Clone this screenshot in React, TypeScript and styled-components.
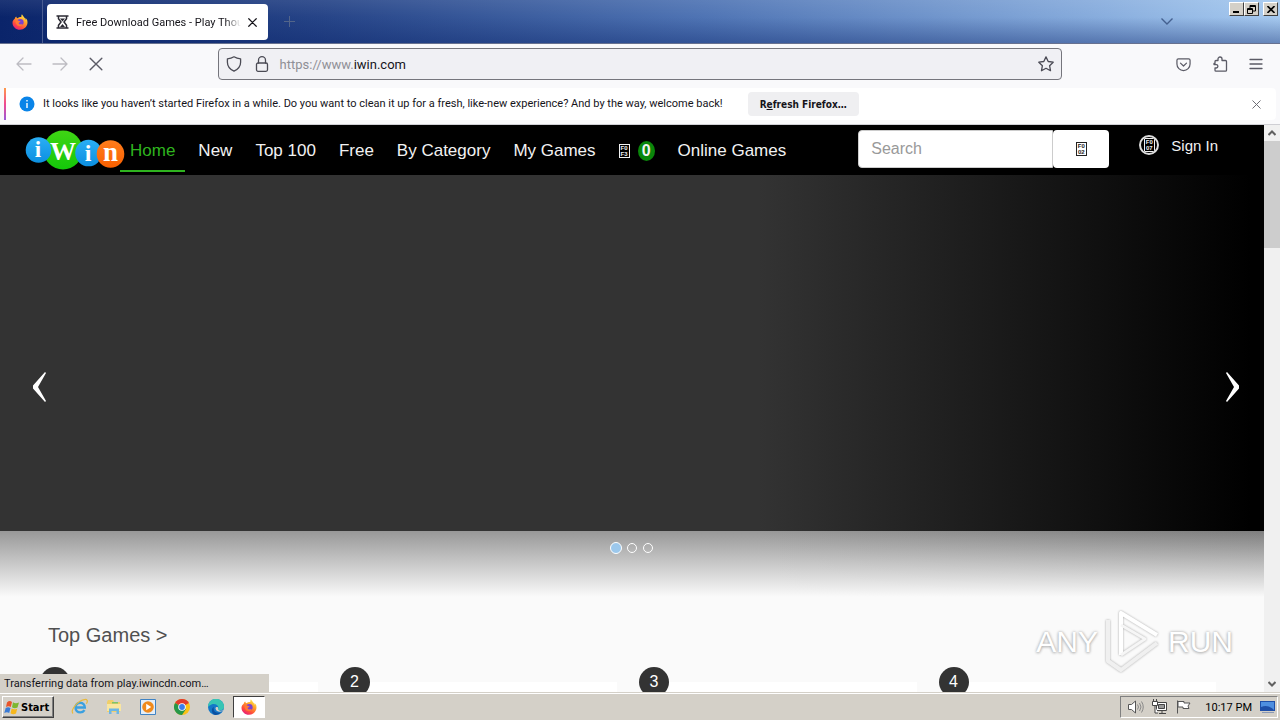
import React from "react";
import styled, { createGlobalStyle, css } from "styled-components";

const uiFont = `Roboto, "Noto Sans", sans-serif`;
const boldFont = `"DejaVu Sans Condensed", "DejaVu Sans", sans-serif`;
const siteFont = `"Liberation Sans", Arial, sans-serif`;

const GlobalStyle = createGlobalStyle`
  *, *::before, *::after { box-sizing: border-box; }
  body { margin: 0; font-family: ${uiFont}; font-size: 11px; color: #15141a; }
  button, input { font: inherit; color: inherit; margin: 0; }
  button { padding: 0; border: 0; background: none; }
  a { color: inherit; text-decoration: none; }
  h2 { margin: 0; }
  svg { display: block; flex: none; }
`;

const Screen = styled.div`
  display: flex;
  flex-direction: column;
  height: 100vh;
  overflow: hidden;
`;

/* ---------- title bar ---------- */

const TitleBar = styled.header`
  display: flex;
  flex: none;
  height: 44px;
  background:
    linear-gradient(to bottom, rgba(255, 255, 255, 0.08), rgba(10, 36, 106, 0) 40%, rgba(10, 36, 106, 0.4)),
    linear-gradient(to right, #0a246a, #264487 25%, #4f74b4 55%, #86abdc 85%, #a6caf0);
  border-bottom: 1px solid #67718f;
`;

const PinnedView = styled.button`
  display: grid;
  place-items: center;
  width: 43px;
  padding-right: 3px;
  border-right: 1px solid #4a5d92;
`;

const Tab = styled.div`
  display: flex;
  align-items: center;
  gap: 7px;
  width: 221px;
  height: 36px;
  margin: 4px 0 0 4px;
  padding: 0 11px 0 9px;
  background: #fff;
  border-radius: 4px;
`;

const TabTitle = styled.span`
  flex: 1;
  overflow: hidden;
  white-space: nowrap;
  color: #15141a;
  mask-image: linear-gradient(to left, transparent, #000 16px);
`;

const NewTabButton = styled.button`
  display: grid;
  place-items: center;
  width: 42px;
`;

const TabsMenuButton = styled.button`
  display: grid;
  place-items: center;
  width: 36px;
  margin-left: auto;
`;

const WindowButtons = styled.div`
  display: flex;
  margin: 2px 2px 0 44px;
`;

const WindowButton = styled.button<{ $apart?: boolean }>`
  display: grid;
  place-items: center;
  width: 15px;
  height: 14px;
  margin-left: ${(p) => (p.$apart ? 4 : 0)}px;
  background: #d4d0c8;
  border: 1px solid;
  border-color: #fff #404040 #404040 #fff;
`;

/* ---------- toolbar ---------- */

const Toolbar = styled.div`
  display: flex;
  flex: none;
  align-items: center;
  height: 44px;
  padding: 0 6px 4px;
  background: #f9f9fb;
`;

const ToolButton = styled.button<{ $faded?: boolean }>`
  display: grid;
  place-items: center;
  width: 36px;
  height: 32px;
  color: ${(p) => (p.$faded ? "#bdbcc2" : "#5b5b66")};
`;

const Spacer = styled.div`
  flex: 1;
`;

const UrlBar = styled.label`
  display: flex;
  flex: 8;
  align-items: center;
  height: 32px;
  padding: 0 7px;
  gap: 12px;
  background: #f0f0f4;
  border: 1px solid #75757c;
  border-radius: 4px;
  color: #4b4b55;
`;

const UrlText = styled.span`
  flex: 1;
  margin-left: -2px;
  font-size: 13px;
  color: #8f8f96;
  b { font-weight: 400; color: #15141a; }
`;

/* ---------- notification ---------- */

const Notice = styled.div`
  flex: none;
  height: 37px;
  padding: 0 4px 4px;
  background: #f9f9fb;
  border-bottom: 1px solid #cfcfd4;
`;

const NoticeCard = styled.div`
  display: flex;
  align-items: center;
  height: 32px;
  padding: 0 15px;
  background: linear-gradient(#ff9a4a, #f04a90 50%, #9a5ad8) left / 2px 100% no-repeat, #fff;
  border-radius: 0 4px 4px 0;
`;

const NoticeText = styled.span`
  margin-left: 8px;
  padding-bottom: 1px;
  white-space: nowrap;
`;

const RefreshButton = styled.button`
  height: 24px;
  margin-left: 25px;
  padding: 0 12px;
  background: #efeff1;
  border-radius: 4px;
  font: 700 10px ${boldFont};
  white-space: nowrap;
`;

const CloseNotice = styled.button`
  margin-left: auto;
  color: #6b6b72;
`;

/* ---------- page ---------- */

const Viewport = styled.div`
  position: relative;
  display: flex;
  flex: 1;
  min-height: 0;
`;

const Page = styled.main`
  flex: 1;
  min-width: 0;
  overflow: hidden;
  background: #fafafa;
  font-family: ${siteFont};
  font-size: 16px;
`;

const SiteNav = styled.nav`
  display: flex;
  height: 50px;
  padding-left: 25px;
  background: #000;
  color: #f2f2f2;
`;

const LogoLink = styled.a`
  padding-top: 5px;
  margin-right: -5px;
`;

const NavLinks = styled.div`
  display: flex;
  gap: 3px;
  height: 47px;
`;

const NavLink = styled.a<{ $active?: boolean }>`
  display: flex;
  align-items: center;
  gap: 8px;
  padding: 6px 10px 0;
  border-bottom: 2px solid transparent;
  font-size: 17px;
  white-space: nowrap;
  ${(p) =>
    p.$active &&
    css`
      color: #2fb41f;
      border-color: #2fb41f;
    `}
`;

const Badge = styled.span`
  display: grid;
  place-items: center;
  width: 17px;
  height: 20px;
  border-radius: 50%;
  background: #0a860a;
  font-size: 16px;
  font-weight: 700;
`;

const GlyphBox = styled.span`
  display: block;
  width: 11px;
  height: 14px;
  border: 1px solid currentColor;
  font: 700 6px/6px "Liberation Sans", sans-serif;
  text-align: center;
`;

const SearchForm = styled.form`
  display: flex;
  width: 251px;
  height: 38px;
  margin: 5px 30px 0 auto;
`;

const SearchInput = styled.input`
  flex: 1;
  min-width: 0;
  padding: 0 12px;
  border: 1px solid #ccc;
  border-radius: 4px 0 0 4px;
  background: #fff;
  color: #333;
  &::placeholder { color: #999; opacity: 1; }
`;

const SearchButton = styled.button`
  display: grid;
  place-items: center;
  width: 56px;
  background: #fff;
  border-radius: 4px;
  color: #222;
`;

const SignIn = styled.a`
  display: flex;
  align-items: center;
  gap: 12px;
  height: 40px;
  margin-right: 46px;
  font-size: 15px;
  white-space: nowrap;
`;

const Avatar = styled.span`
  display: grid;
  place-items: center;
  width: 20px;
  height: 20px;
  border: 2px solid #ddd;
  border-radius: 50%;
  overflow: hidden;
`;

const Hero = styled.section`
  display: flex;
  align-items: center;
  justify-content: space-between;
  aspect-ratio: 32 / 9;
  padding: 69px 24px 0 32px;
  background: linear-gradient(to right, #333 60%, #000 99%);
`;

const Dots = styled.div`
  display: flex;
  align-items: center;
  justify-content: center;
  gap: 6px;
  height: 66px;
  padding: 0 2px 32px 0;
  background: linear-gradient(rgba(250, 250, 250, 0), #fafafa), linear-gradient(to right, #989898 60%, #7e7e7e);
`;

const Dot = styled.button<{ $on?: boolean }>`
  width: ${(p) => (p.$on ? 12 : 10)}px;
  height: ${(p) => (p.$on ? 12 : 10)}px;
  border: 1px solid #fff;
  border-radius: 50%;
  background: ${(p) => (p.$on ? "#9cc8ec" : "transparent")};
  margin-right: ${(p) => (p.$on ? -1 : 0)}px;
`;

const SectionTitle = styled.h2`
  padding: 24px 48px 0;
  font-size: 20px;
  line-height: 28px;
  font-weight: 400;
  color: #505050;
`;

const GameGrid = styled.div`
  display: grid;
  grid-template-columns: repeat(4, 1fr);
  gap: 30px;
  padding: 33px 48px 0;
`;

const GameCard = styled.article`
  height: 200px;
  background: #fff;
`;

const Rank = styled.span`
  display: grid;
  place-items: center;
  width: 30px;
  height: 30px;
  margin: -15px 0 0 -8px;
  padding-top: 1px;
  border-radius: 50%;
  background: #333;
  color: #fff;
`;

const ScrollBar = styled.div`
  display: flex;
  flex-direction: column;
  width: 16px;
  background: #f0f0f0;
  color: #606060;
`;

const ScrollArrow = styled.button`
  display: grid;
  place-items: center;
  height: 16px;
`;

const ScrollTrack = styled.div`
  flex: 1;
`;

const ScrollThumb = styled.div`
  height: 20%;
  background: #cdcdcd;
`;

const StatusPanel = styled.div`
  position: absolute;
  left: 0;
  bottom: 0;
  width: 269px;
  height: 18px;
  padding-left: 4px;
  background: #d4d0c8;
  line-height: 20px;
  white-space: nowrap;
`;

const Watermark = styled.div`
  position: absolute;
  right: 47px;
  bottom: 18px;
  display: flex;
  align-items: center;
  gap: 7px;
  font: 400 30px/64px "Liberation Sans Narrow", "Liberation Sans", sans-serif;
  color: #fff;
  text-shadow: 0 0 3px #aaa, 0 1px 3px #bbb;
`;

const WatermarkArrow = styled.svg`
  filter: drop-shadow(0 0 1px #a8a8a8);
`;

/* ---------- taskbar ---------- */

const TaskBar = styled.footer`
  display: flex;
  flex: none;
  align-items: center;
  height: 28px;
  padding: 1px 2px 0;
  background: #d4d0c8;
  border-top: 1px solid #d4d0c8;
  box-shadow: inset 0 1px #fff;
`;

const StartButton = styled.button`
  display: flex;
  align-items: center;
  gap: 1px;
  width: 52px;
  height: 22px;
  padding-left: 1px;
  border: 1px solid;
  border-color: #fff #404040 #404040 #fff;
  box-shadow: inset -1px -1px #808080;
  font: 700 11px ${boldFont};
  color: #000;
`;

const QuickLaunch = styled.div`
  display: flex;
  margin-left: 9px;
`;

const TaskButton = styled.button<{ $active?: boolean }>`
  display: grid;
  place-items: center;
  width: 34px;
  height: 22px;
  ${(p) =>
    p.$active &&
    css`
      width: 32px;
      background: #fff;
      border: 1px solid;
      border-color: #404040 #fff #fff #404040;
    `}
`;

const Tray = styled.div`
  display: flex;
  align-items: center;
  height: 22px;
  margin-left: auto;
  padding: 0 1px 0 6px;
  gap: 7px;
  border: 1px solid;
  border-color: #808080 #fff #fff #808080;
  color: #000;
`;

const Clock = styled.time`
  margin: 0 1px 0 6px;
  white-space: nowrap;
`;

/* ---------- drawings ---------- */

const Cross = ({ size, width = 1.2 }: { size: number; width?: number }) => (
  <svg width={size} height={size} viewBox="0 0 12 12" fill="none" stroke="currentColor" strokeWidth={width} strokeLinecap="round">
    <path d="M1 1l10 10M11 1L1 11" />
  </svg>
);

const Stroke = ({ size = 16, width = 1.3, children }: { size?: number; width?: number; children: React.ReactNode }) => (
  <svg width={size} height={size} viewBox="0 0 16 16" fill="none" stroke="currentColor" strokeWidth={width} strokeLinecap="round" strokeLinejoin="round">
    {children}
  </svg>
);

const FirefoxLogo = ({ id, size = 16 }: { id: string; size?: number }) => (
  <svg width={size} height={size} viewBox="0 0 16 16">
    <defs>
      <linearGradient id={id} x1="0.8" y1="0" x2="0.2" y2="1">
        <stop offset="0" stopColor="#fff44f" />
        <stop offset="0.35" stopColor="#ffa62b" />
        <stop offset="0.7" stopColor="#ff4f3a" />
        <stop offset="1" stopColor="#e31587" />
      </linearGradient>
    </defs>
    <path fill={`url(#${id})`} d="M15.200 6.200c-.4-1-1.200-2-1.800-2.300.4.9.6 1.700.6 2.200C13 3.700 11.200 2.700 9.900.300 9.500 1.100 9.200 2 9.300 3 7.700 3 6.400 3.600 5.400 4.200c-.7-.3-1.100-.9-1.200-1.700C3.300 3.100 2.800 3.900 2.700 4.800 1.600 5.600.4 7 .5 9c.2 3.900 3.400 6.800 7.400 6.800s7.400-3.100 7.600-7c0-.9-.1-1.800-.3-2.600z" />
    <circle cx="8.300" cy="8.300" r="3.300" fill="#7a42d0" />
    <path fill="#ff7a35" d="M3.600 6.200c1.400-.5 2.500-.2 3.300.7.900.1 1.500.2 1.600.5-.2.700-1.300.9-1.700 1.300-.3 1.200.8 2 2 1.600 1-.3 1.600-.2 1.900.2-.8 1.300-2.100 1.900-3.600 1.600-2.500-.5-3.900-3.200-3.500-5.900z" />
  </svg>
);

const IWinLogo = () => (
  <svg width="100" height="41" viewBox="0 0 100 41" role="img" aria-label="iWin">
    <defs>
      <linearGradient id="iw-blue" x1="0" y1="0" x2="0" y2="1">
        <stop offset="0" stopColor="#2aaef5" />
        <stop offset="1" stopColor="#0c8fe0" />
      </linearGradient>
      <linearGradient id="iw-green" x1="0" y1="0" x2="0" y2="1">
        <stop offset="0" stopColor="#3fd414" />
        <stop offset="1" stopColor="#14c80a" />
      </linearGradient>
      <linearGradient id="iw-orange" x1="0" y1="0" x2="0" y2="1">
        <stop offset="0" stopColor="#ff7d1c" />
        <stop offset="1" stopColor="#f96000" />
      </linearGradient>
    </defs>
    <circle cx="38" cy="20" r="19.500" fill="url(#iw-green)" />
    <circle cx="13.500" cy="20" r="12.800" fill="url(#iw-blue)" />
    <circle cx="63.500" cy="23" r="13.300" fill="url(#iw-blue)" />
    <circle cx="85.500" cy="24" r="13.800" fill="url(#iw-orange)" />
    <g fill="#fff" fontFamily='"Liberation Serif", serif' fontWeight="700" textAnchor="middle">
      <text x="13" y="27" fontSize="23">i</text>
      <text x="38" y="30" fontSize="26">W</text>
      <text x="63" y="31" fontSize="24">i</text>
      <text x="85.500" y="31" fontSize="27">n</text>
    </g>
  </svg>
);

const Hex = ({ top, bottom }: { top: string; bottom: string }) => (
  <GlyphBox aria-hidden="true">
    {top}
    <br />
    {bottom}
  </GlyphBox>
);

const links = ["New", "Top 100", "Free", "By Category", "My Games"];

export default function App() {
  return (
    <Screen>
      <GlobalStyle />

      <TitleBar>
        <PinnedView aria-label="Firefox View">
          <FirefoxLogo id="fx-view" />
        </PinnedView>
        <Tab>
          <svg width="13" height="14" viewBox="0 0 13 14" fill="none" stroke="#2b2a33" strokeWidth="1.500">
            <path d="M.500 1h12M.500 13h12M2.500 1v2.800L5 7l-2.500 3.200V13M10.500 1v2.800L8 7l2.500 3.200V13" />
            <path d="M4 3.500h5L6.500 6.500zM4 12l2.500-3L9 12z" fill="#2b2a33" stroke="none" />
          </svg>
          <TabTitle>Free Download Games - Play Thousands</TabTitle>
          <button aria-label="Close tab"><Cross size={9} width={1.600} /></button>
        </Tab>
        <NewTabButton aria-label="New tab">
          <svg width="11" height="11" viewBox="0 0 11 11" stroke="#53658a" strokeWidth="1"><path d="M5.500 0v11M0 5.500h11" /></svg>
        </NewTabButton>
        <TabsMenuButton aria-label="List all tabs">
          <svg width="12" height="7" viewBox="0 0 12 7" fill="none" stroke="#44608f" strokeWidth="1.400"><path d="M.5.500L6 6l5.500-5.500" /></svg>
        </TabsMenuButton>
        <WindowButtons>
          <WindowButton aria-label="Minimize">
            <svg width="9" height="8" viewBox="0 0 9 8"><path d="M1 6h6v2H1z" /></svg>
          </WindowButton>
          <WindowButton aria-label="Restore">
            <svg width="9" height="9" viewBox="0 0 9 9" fill="none" stroke="#000"><path d="M3 3V.500h5.500V6H6M3 1.500h5M.500 3.500h5v5h-5zM.500 4.500h5" /></svg>
          </WindowButton>
          <WindowButton aria-label="Close" $apart>
            <svg width="8" height="7" viewBox="0 0 8 7" stroke="#000" strokeWidth="1.600"><path d="M.500 0l7 7M7.500 0l-7 7" /></svg>
          </WindowButton>
        </WindowButtons>
      </TitleBar>

      <Toolbar>
        <ToolButton aria-label="Back" $faded><Stroke><path d="M15 8H1.500M7 2L1 8l6 6" /></Stroke></ToolButton>
        <ToolButton aria-label="Forward" $faded><Stroke><path d="M1 8h13.500M9 2l6 6-6 6" /></Stroke></ToolButton>
        <ToolButton aria-label="Stop"><Cross size={14} width={1.200} /></ToolButton>
        <Spacer />
        <UrlBar>
          <Stroke><path d="M8 .800c2 1.200 4.300 1.800 6.600 2v3.400c0 4-2.500 7-6.600 9-4.100-2-6.600-5-6.600-9V2.800C3.700 2.600 6 2 8 .800z" /></Stroke>
          <Stroke><rect x="2.500" y="7" width="11" height="8.300" rx="1.500" /><path d="M4.500 7V4.200a3.500 3.500 0 017 0V7" /></Stroke>
          <UrlText>https://www.<b>iwin.com</b></UrlText>
          <Stroke><path d="M8 .900l2.200 4.600 5 .700-3.600 3.500.900 5L8 12.300l-4.500 2.400.900-5L.800 6.200l5-.700z" /></Stroke>
        </UrlBar>
        <Spacer />
        <ToolButton aria-label="Save to Pocket">
          <Stroke size={15}><path d="M2.500 2h11a1.500 1.500 0 011.500 1.500V7.500a7 7 0 01-14 0V3.500A1.500 1.500 0 012.500 2zM4.800 6.500L8 9.600l3.200-3.100" /></Stroke>
        </ToolButton>
        <ToolButton aria-label="Extensions">
          <Stroke><path d="M6 4.500V3a2 2 0 014 0v1.500h3.500a1 1 0 011 1v8.700a1 1 0 01-1 1H4a1 1 0 01-1-1V12h1.200a1.700 1.700 0 000-3.400H2V7.500h1v-2a1 1 0 011-1z" /></Stroke>
        </ToolButton>
        <ToolButton aria-label="Menu"><Stroke><path d="M2 3.500h12M2 8h12M2 12.500h12" /></Stroke></ToolButton>
      </Toolbar>

      <Notice>
        <NoticeCard>
          <svg width="16" height="16" viewBox="0 0 16 16"><circle cx="8" cy="8" r="7.500" fill="#0a84e8" /><path d="M8 7v5M8 4v1.500" stroke="#fff" strokeWidth="1.400" /></svg>
          <NoticeText>
            It looks like you haven’t started Firefox in a while. Do you want to clean it up for a fresh, like-new experience? And by the way, welcome back!
          </NoticeText>
          <RefreshButton>R<u>e</u>fresh Firefox…</RefreshButton>
          <CloseNotice aria-label="Dismiss"><Cross size={9} width={1.300} /></CloseNotice>
        </NoticeCard>
      </Notice>

      <Viewport>
        <Page>
          <SiteNav>
            <LogoLink href="#home"><IWinLogo /></LogoLink>
            <NavLinks>
              <NavLink href="#home" $active>Home</NavLink>
              {links.map((label) => (
                <NavLink key={label} href="#games">{label}</NavLink>
              ))}
              <NavLink href="#alerts" aria-label="Notifications"><Hex top="F0" bottom="F3" /><Badge>0</Badge></NavLink>
              <NavLink href="#online">Online Games</NavLink>
            </NavLinks>
            <SearchForm onSubmit={(e) => e.preventDefault()}>
              <SearchInput type="search" placeholder="Search" aria-label="Search" />
              <SearchButton aria-label="Submit search"><Hex top="F0" bottom="02" /></SearchButton>
            </SearchForm>
            <SignIn href="#sign-in"><Avatar><Hex top="F0" bottom="07" /></Avatar>Sign In</SignIn>
          </SiteNav>

          <Hero>
            <button aria-label="Previous slide">
              <svg width="15" height="30" viewBox="0 0 15 30" fill="#fff"><path d="M13 0l1 1L6 15l8 14-1 1L1 16.500v-3z" /></svg>
            </button>
            <button aria-label="Next slide">
              <svg width="15" height="30" viewBox="0 0 15 30" fill="#fff"><path d="M2 0L1 1l8 14-8 14 1 1 12-13.500v-3z" /></svg>
            </button>
          </Hero>
          <Dots>
            <Dot aria-label="Slide 1" $on />
            <Dot aria-label="Slide 2" />
            <Dot aria-label="Slide 3" />
          </Dots>

          <SectionTitle><a href="#top">Top Games &gt;</a></SectionTitle>
          <GameGrid>
            {[1, 2, 3, 4].map((n) => (
              <GameCard key={n}><Rank>{n}</Rank></GameCard>
            ))}
          </GameGrid>
        </Page>

        <ScrollBar>
          <ScrollArrow aria-label="Scroll up"><svg width="8" height="6" viewBox="0 0 8 6" fill="none" stroke="currentColor" strokeWidth="2"><path d="M.500 5L4 1.500 7.500 5" /></svg></ScrollArrow>
          <ScrollTrack><ScrollThumb /></ScrollTrack>
          <ScrollArrow aria-label="Scroll down"><svg width="8" height="6" viewBox="0 0 8 6" fill="none" stroke="currentColor" strokeWidth="2"><path d="M.500 1L4 4.500 7.500 1" /></svg></ScrollArrow>
        </ScrollBar>

        <StatusPanel role="status">Transferring data from play.iwincdn.com…</StatusPanel>
        <Watermark>
          <span>ANY</span>
          <WatermarkArrow width="56" height="64" viewBox="0 0 56 64" fill="none" stroke="#fff" strokeWidth="4" strokeLinejoin="round">
            <path d="M52 25L16 3v42" />
            <path d="M3 10v41l13 9 36-27" stroke="#f0f0f0" />
            <path d="M16 15l24 14-24 16" stroke="#f6f6f6" strokeWidth="3" />
          </WatermarkArrow>
          <span>RUN</span>
        </Watermark>
      </Viewport>

      <TaskBar>
        <StartButton>
          <svg width="16" height="15" viewBox="0 0 16 15">
            <path d="M3 2.500Q5.500 0 8 2L6.800 7Q4.500 5.500 2 7z" fill="#e8542a" />
            <path d="M9 2.300Q11.500 4 15 2.500L13.500 7.500Q10.500 9 8 7.300z" fill="#7db72f" />
            <path d="M1.700 8Q4 6.500 6.500 8L5.200 13Q3 11.500.300 13z" fill="#3a7bd5" />
            <path d="M7.700 8.500Q10 10 13.200 8.700L12 13.500Q9 15 6.500 13.200z" fill="#f6b71c" />
          </svg>
          Start
        </StartButton>
        <QuickLaunch>
          <TaskButton aria-label="Internet Explorer">
            <svg width="18" height="18" viewBox="0 0 18 18" fill="none">
              <path d="M4.500 9.500h9.300c0-3-2-4.800-4.600-4.800S4.500 6.800 4.500 9.600s2 4.800 4.800 4.800c1.900 0 3.300-.800 4.200-2.200" stroke="#3aa0e0" strokeWidth="2.400" />
              <path d="M2 15.500C-.500 13 4 6 9 3.200c3-1.700 6.500-2.500 7.200-.700.300.8 0 2-.800 3.300" stroke="#e8b93c" strokeWidth="1.200" />
            </svg>
          </TaskButton>
          <TaskButton aria-label="Explorer">
            <svg width="16" height="16" viewBox="0 0 16 16">
              <path d="M1 3l1-2h5l1 2h6v10H1z" fill="#f0cf6a" /><path d="M1 5h14v7H1z" fill="#f9e6a0" />
              <path d="M3 15V9.500h10V15h-2.500v-3h-5v3z" fill="#6db6e4" /><path d="M6 3h6v1.500H6z" fill="#7cc46b" />
            </svg>
          </TaskButton>
          <TaskButton aria-label="Media Player">
            <svg width="16" height="16" viewBox="0 0 16 16">
              <path d="M.500.500h15v15H.500z" fill="#e4eef8" stroke="#3f83c4" /><circle cx="8" cy="8" r="5.800" fill="#f08a1c" /><path d="M6.200 4.800L11.200 8l-5 3.200z" fill="#fff" />
            </svg>
          </TaskButton>
          <TaskButton aria-label="Chrome">
            <svg width="16" height="16" viewBox="0 0 16 16">
              <circle cx="8" cy="8" r="8" fill="#fbc116" />
              <path d="M8 8L1.070 4A8 8 0 0114.930 4z" fill="#e33b2e" />
              <path d="M8 8L1.070 4A8 8 0 008 16l4-6z" fill="#26974a" />
              <circle cx="8" cy="8" r="3.800" fill="#fff" /><circle cx="8" cy="8" r="2.900" fill="#3b7ded" />
            </svg>
          </TaskButton>
          <TaskButton aria-label="Edge">
            <svg width="16" height="16" viewBox="0 0 16 16">
              <circle cx="8" cy="8" r="8" fill="#1478c8" />
              <path d="M0 8a8 8 0 0116-.500c.200 2.500-1.600 3.800-3.600 3.800-2 0-2.600-.800-2.200-1.600C11.500 6.500 7 4 3.500 5.500 1.500 6.300.300 7.500 0 8z" fill="#37c5b4" />
              <path d="M6 8c-1.300 3.500 1.500 7 7 5.500a8 8 0 01-6 2.400C3 14.500 3 9 6 8z" fill="#0b4fa0" />
              <path d="M7.500 9.500c-.500-1.800 2.800-2.400 2.700-.200-.300.900-.100 1.700 1.200 2.100 1.200.400 2.800.400 4.100-.400-1.500 2.500-7.400 2.500-8-1.500z" fill="#d4d0c8" />
            </svg>
          </TaskButton>
          <TaskButton aria-label="Firefox" $active><FirefoxLogo id="fx-task" /></TaskButton>
        </QuickLaunch>
        <Tray>
          <svg width="17" height="16" viewBox="0 0 17 16" fill="none" stroke="#555">
            <path d="M1.500 5.500h3L8.500 2v12l-4-3.500h-3z" fill="#fff" /><path d="M10.500 5.500q2 2.500 0 5M12.500 4q3 4 0 8M14.500 2.500q3.500 5.500 0 11" stroke="#888" />
          </svg>
          <svg width="17" height="16" viewBox="0 0 17 16" fill="none" stroke="#444">
            <path d="M5.500 3.500h10v8h-10z" fill="#fff" /><path d="M7.500 5.500h6v4h-6z" fill="#999" /><path d="M8 14.500h7M11 12v2" /><path d="M1.500 2.500h5v4h-5zM2.500 2V0M5.500 2V0M4 7v7h3" fill="#fff" />
          </svg>
          <svg width="17" height="16" viewBox="0 0 17 16" fill="#fff" stroke="#555">
            <path d="M2.500 1.500v13" /><path d="M3 2.500h6v1.500h6l-2 3 1 2.500H8V8H3z" />
          </svg>
          <Clock>10:17 PM</Clock>
          <svg width="16" height="14" viewBox="0 0 16 14">
            <path d="M0 1h15v10H0z" fill="#1f4fa8" /><path d="M1 2h13v8Q8 4 1 7z" fill="#4f8fe0" /><path d="M2 12h12v1H2z" fill="#8a99b5" />
          </svg>
        </Tray>
      </TaskBar>
    </Screen>
  );
}
